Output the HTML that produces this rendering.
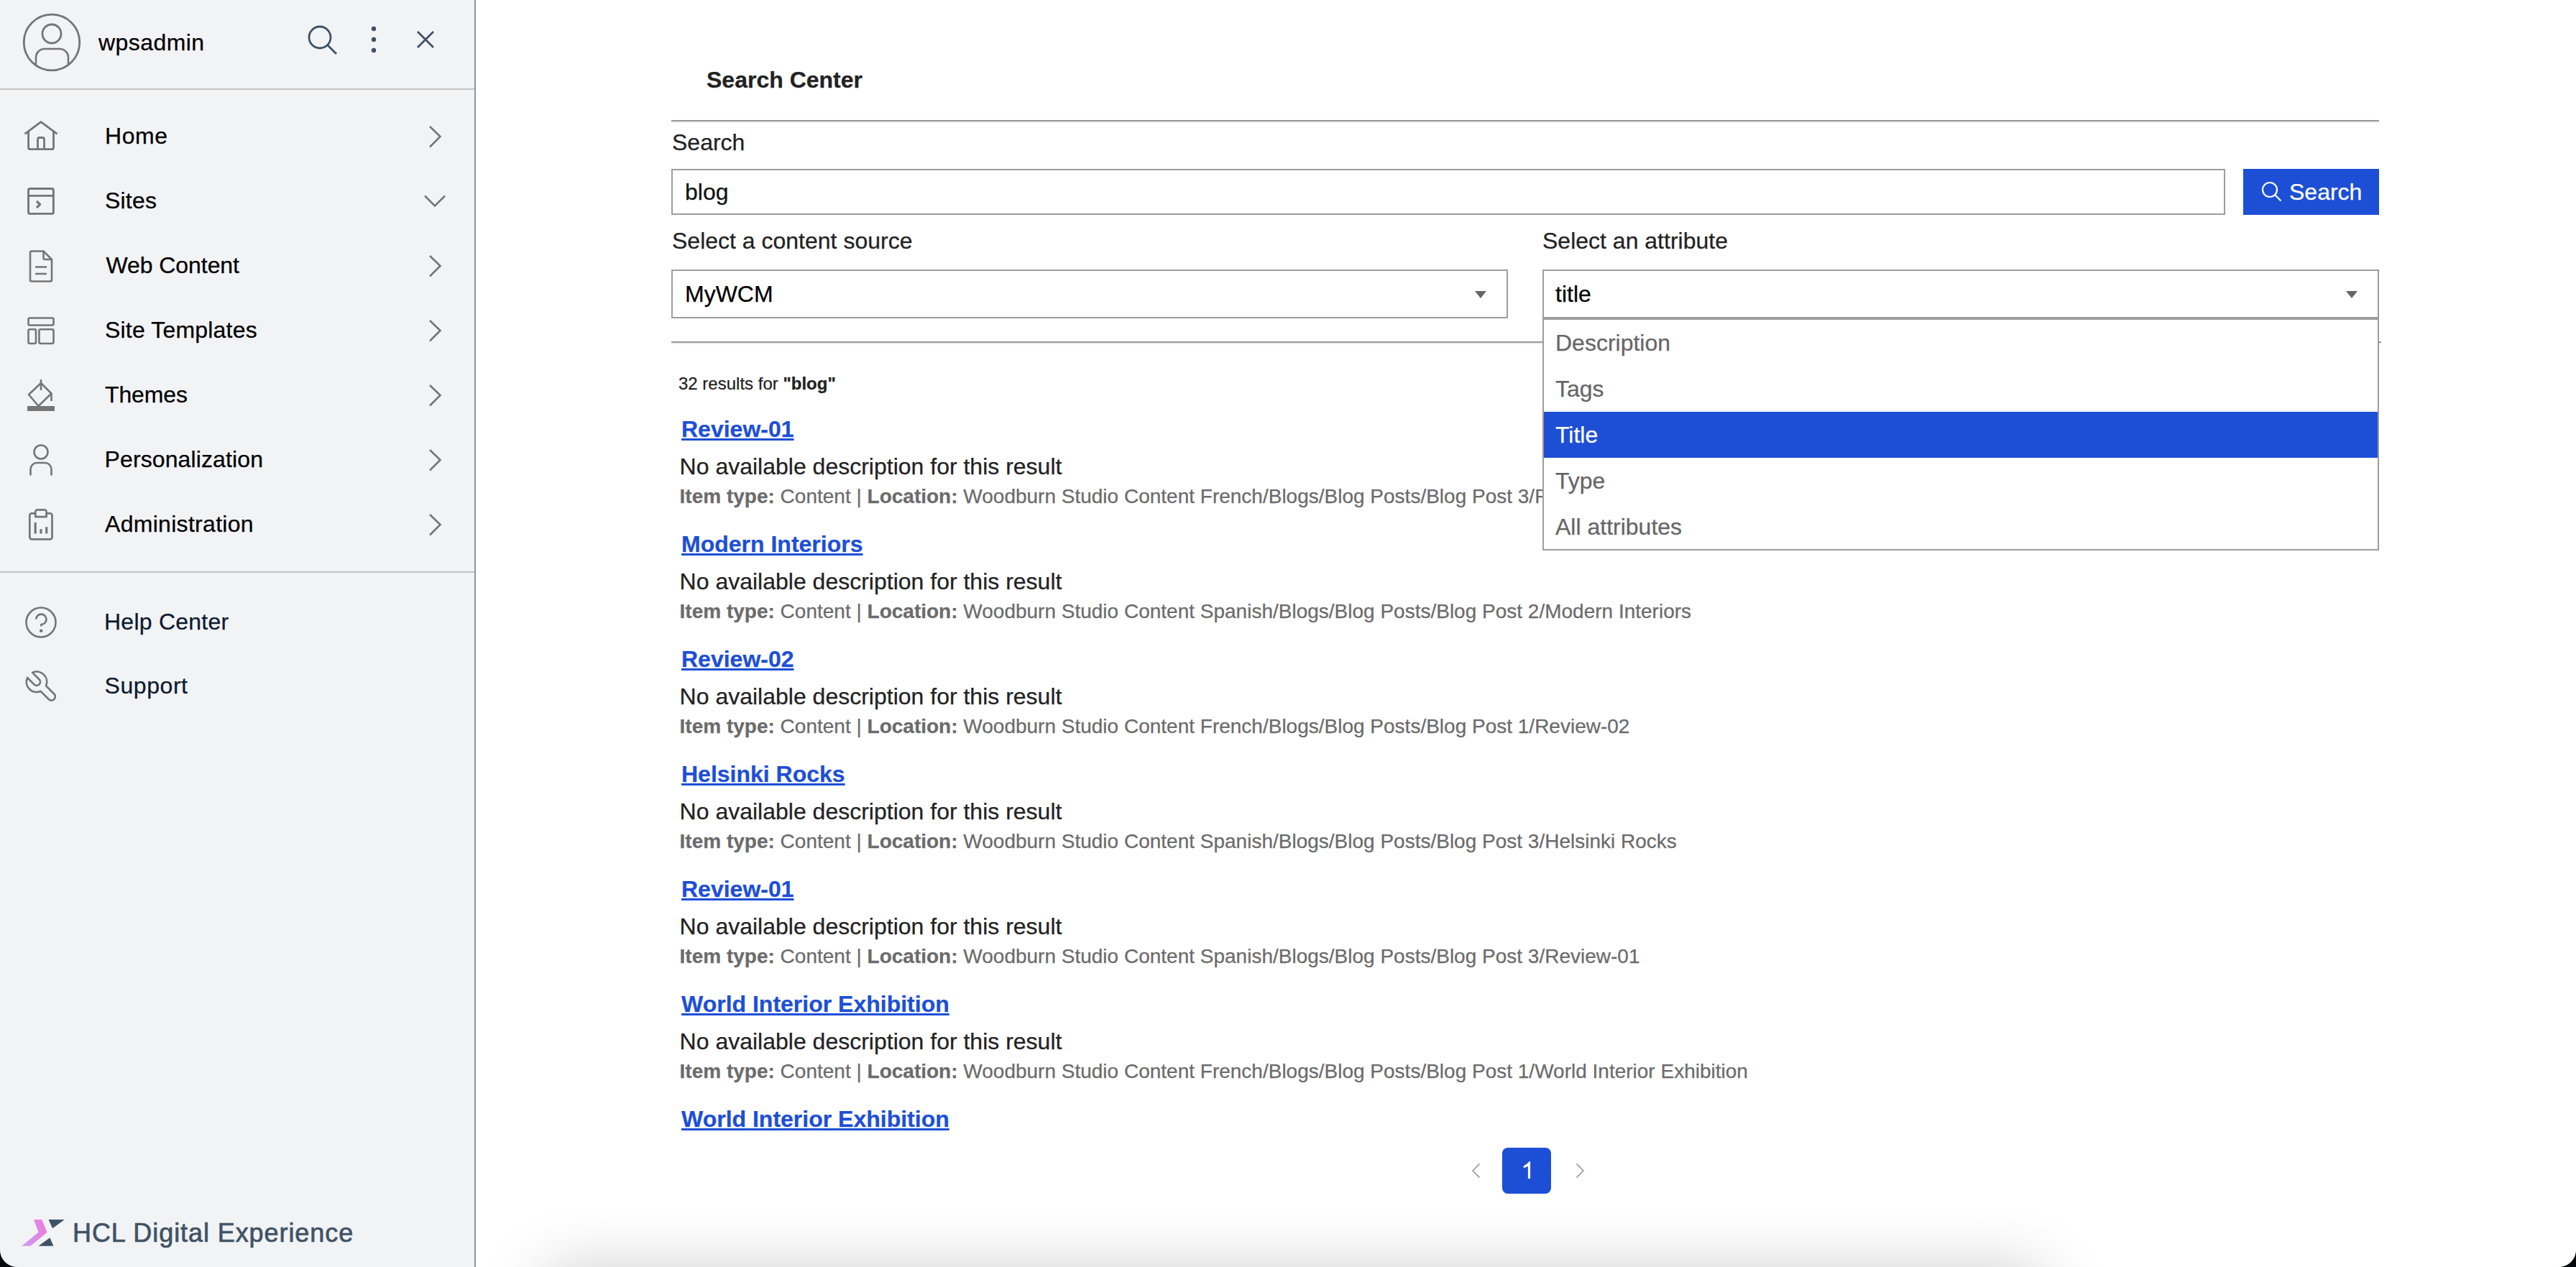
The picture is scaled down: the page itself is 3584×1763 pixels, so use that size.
<!DOCTYPE html>
<html><head><meta charset="utf-8">
<style>
*{margin:0;padding:0;box-sizing:border-box}
html,body{width:3584px;height:1763px;overflow:hidden;background:#fff;font-family:"Liberation Sans",sans-serif;color:#222;-webkit-text-stroke-width:0.25px}
.a{position:absolute;white-space:nowrap}
#side{position:absolute;left:0;top:0;width:662px;height:1763px;background:#f2f3f5;border-right:2px solid #8a96a3}
.t32{font-size:32px;line-height:40px}
.nav{color:#000}
.hr1{position:absolute;left:0;width:660px;height:2px;background:#c4c4c4}
svg{position:absolute;overflow:visible}
.hr2{position:absolute;left:934px;height:4px;border-top:2px solid #999;border-bottom:2px solid #eee}
.box{position:absolute;border:2px solid #9d9d9d;background:#fff}
.btn{position:absolute;background:#1d4fd6}
.lnk{color:#1d4fd6;font-weight:bold;text-decoration:underline;text-decoration-thickness:2.5px;text-underline-offset:2px}
.meta{font-size:28px;line-height:40px;color:#6b6b6b}
.pg{position:absolute;background:#1d4fd6;border-radius:8px;color:#fff;font-size:32px;line-height:64px;text-align:center}
.dd{position:absolute;border:2px solid #9d9d9d;background:#fff}
.opt{height:64px;font-size:32px;line-height:40px;padding:12px 0 0 16px;color:#666}
.opt.sel{background:#1d4fd6;color:#fff}
.corner{position:absolute;bottom:0;width:24px;height:24px;background:radial-gradient(circle at 24px 0, transparent 23.5px, #05080c 24.5px)}
.shadow{position:absolute;left:780px;top:1790px;width:2040px;height:100px;box-shadow:0 0 90px 20px rgba(0,0,0,.22)}

</style></head><body>
<div id="side">
  <!-- header -->
  <svg style="left:0;top:0" width="660" height="124" fill="none">
    <g stroke="#757575" stroke-width="2.6">
      <circle cx="72" cy="59" r="38.8" stroke-width="2.8"/>
      <circle cx="72" cy="47" r="13" stroke-width="2.8"/>
      <path d="M50 91 V80 a12 12 0 0 1 12 -12 H83 a12 12 0 0 1 12 12 V91"/>
    </g>
    <g stroke="#3e5166" stroke-width="2.8">
      <circle cx="445" cy="52" r="15"/>
      <path d="M456 63 L468 75"/>
      <path d="M581 44 L603 66 M603 44 L581 66"/>
    </g>
    <g fill="#3e5166">
      <circle cx="520" cy="40" r="3.2"/><circle cx="520" cy="55" r="3.2"/><circle cx="520" cy="70" r="3.2"/>
    </g>
  </svg>
  <div class="a t32 nav" style="left:137px;top:39px;letter-spacing:0.43px">wpsadmin</div>
  <div class="hr1" style="top:123px"></div>
  <!-- nav icons -->
  <svg style="left:0;top:124px" width="660" height="900" fill="none">
    <g stroke="#757575" stroke-width="2.6" stroke-linejoin="round">
      <!-- home: top=168..209 -> local y -124 -->
      <path d="M34.5 62.3 L57 45.6 L79.5 62.3" stroke-width="2.8"/>
      <path d="M39.6 58 V81.2 a2.5 2.5 0 0 0 2.5 2.5 H72 a2.5 2.5 0 0 0 2.5 -2.5 V58" stroke-width="2.8"/>
      <path d="M52.5 84 V70 a2.5 2.5 0 0 1 2.5 -2.5 H59 a2.5 2.5 0 0 1 2.5 2.5 V84" stroke-width="2.8"/>
      <!-- sites: 261..299 -->
      <rect x="39.55" y="138.55" width="34.8" height="34.8" rx="2.2" stroke-width="2.9"/>
      <path d="M39.55 148.4 H74.35" stroke-width="2.9"/>
      <path d="M51 155.8 L55.6 160.4 L51 165" stroke-width="3.2"/>
      <!-- web content 348..392 -->
      <path d="M60.5 225.5 H44 a2 2 0 0 0 -2 2 V265.5 a2 2 0 0 0 2 2 H70 a2 2 0 0 0 2 -2 V237 Z"/>
      <path d="M60.5 225.5 V235 a2 2 0 0 0 2 2 H72"/>
      <path d="M49 247.5 H65 M49 257 H65" stroke-linecap="butt"/>
      <!-- site templates 441..478 -->
      <rect x="39.5" y="318.5" width="35" height="10" rx="2"/>
      <rect x="39.5" y="334.3" width="10.5" height="19.7" rx="2"/>
      <rect x="54.5" y="334.3" width="20" height="19.7" rx="2"/>
      <!-- themes 528..572 -->
      <path d="M40 425 L57 409 L71.5 423.5 L53.5 441 Z"/>
      <path d="M57 404 V419 M71.5 423.5 V434"/>
      <!-- personalization 618..661 -->
      <circle cx="57" cy="505" r="9.5"/>
      <path d="M42.5 537.5 V529 a9 9 0 0 1 9 -9 H62.5 a9 9 0 0 1 9 9 V537.5"/>
      <!-- administration 708..752 -->
      <rect x="41.3" y="590.4" width="31.2" height="35.9" rx="2.8" stroke-width="2.7"/>
      <path d="M49.3 595.2 V588.2 a2.8 2.8 0 0 1 2.8 -2.8 H61.8 a2.8 2.8 0 0 1 2.8 2.8 V595.2 Z" fill="#f2f3f5" stroke-width="2.7"/>
      <path d="M49.2 603 V618.4 M57 612.3 V618.4 M64.7 609.2 V618.4" stroke-width="3.2"/>
      <!-- help 844..888 -->
      <circle cx="57" cy="742" r="20.5"/>
      <path d="M50.1 737.8 A7.2 7.2 0 1 1 57.3 745 V747.6"/>
      <!-- support wrench 933..976 -->
      <path d="M-5 -13.29 V0 A5 5 0 0 0 5 0 V-13.29 A14.2 14.2 0 0 1 5.3 13.17 V29 A5.3 5.3 0 0 1 -5.3 29 V13.17 A14.2 14.2 0 0 1 -5 -13.29 Z" transform="translate(51,824.8) rotate(-45)" stroke-width="2.7"/>
    </g>
    <circle cx="57.2" cy="753.8" r="2.3" fill="#757575"/>
    <!-- chevrons -->
    <g stroke="#757575" stroke-width="2.6">
      <path d="M598 52 L612.5 66 L598 80.5"/>
      <path d="M591 148.5 L605 162.5 L619 148.5"/>
      <path d="M598 232 L612.5 246 L598 260.5"/>
      <path d="M598 322 L612.5 336 L598 350.5"/>
      <path d="M598 412 L612.5 426 L598 440.5"/>
      <path d="M598 502 L612.5 516 L598 530.5"/>
      <path d="M598 592 L612.5 606 L598 620.5"/>
    </g>
    <rect x="38" y="441" width="38" height="7" fill="#757575"/>
  </svg>
  <div class="a t32 nav" style="left:146px;top:169px;letter-spacing:0.6px">Home</div>
  <div class="a t32 nav" style="left:146px;top:259px;letter-spacing:0.2px">Sites</div>
  <div class="a t32 nav" style="left:147.5px;top:349px;letter-spacing:-0.07px">Web Content</div>
  <div class="a t32 nav" style="left:146px;top:439px;letter-spacing:0.18px">Site Templates</div>
  <div class="a t32 nav" style="left:146px;top:529px;letter-spacing:-0.14px">Themes</div>
  <div class="a t32 nav" style="left:145.5px;top:619px;letter-spacing:0.12px">Personalization</div>
  <div class="a t32 nav" style="left:146px;top:709px;letter-spacing:0.3px">Administration</div>
  <div class="hr1" style="top:795px"></div>
  <div class="a t32" style="left:145px;top:845px;color:#0b1a30;letter-spacing:0.24px">Help Center</div>
  <div class="a t32" style="left:145.5px;top:934px;color:#0b1a30;letter-spacing:0.57px">Support</div>
  <!-- logo -->
  <svg style="left:0;top:1690px" width="120" height="50">
    <defs><linearGradient id="lg" gradientUnits="userSpaceOnUse" x1="30" y1="40" x2="66" y2="34"><stop offset="0" stop-color="#c99df3"/><stop offset="1" stop-color="#ea7edf"/></linearGradient></defs>
    <path d="M47 7 H58.2 L65.6 24.8 L42.4 43.8 H30.2 L53.5 24.8 Z" fill="url(#lg)"/>
    <path d="M67.5 7 H89.9 L73.1 19.2 Z" fill="#3f5266"/>
    <path d="M53.5 43.8 H74.4 L69.4 32.3 Z" fill="#3f5266"/>
  </svg>
  <div class="a" style="left:101px;top:1692px;font-size:36px;line-height:48px;color:#3f5266;letter-spacing:0.92px;-webkit-text-stroke:0.7px #3f5266">HCL Digital Experience</div>
</div>
<div id="main">
  <div class="a t32" style="left:983px;top:91px;font-weight:bold">Search Center</div>
  <div class="hr2" style="top:167px;width:2376px"></div>
  <div class="a t32" style="left:935px;top:178px">Search</div>
  <div class="box" style="left:934px;top:235px;width:2162px;height:64px"></div>
  <div class="a t32" style="left:953px;top:247px;color:#111">blog</div>
  <div class="btn" style="left:3121px;top:235px;width:189px;height:64px"></div>
  <svg style="left:3140px;top:250px" width="40" height="36" fill="none" stroke="#fff" stroke-width="2.2"><circle cx="18" cy="14" r="10"/><path d="M25.2 21.2 L33.5 29.5"/></svg>
  <div class="a t32" style="left:3185px;top:247px;color:#fff">Search</div>
  <div class="a t32" style="left:935px;top:315px">Select a content source</div>
  <div class="a t32" style="left:2146px;top:315px">Select an attribute</div>
  <div class="box" style="left:934px;top:375px;width:1164px;height:68px"></div>
  <div class="a t32" style="left:953px;top:389px;color:#000">MyWCM</div>
  <svg style="left:2052px;top:405px" width="16" height="10"><path d="M0 0 H16 L8 10 Z" fill="#666"/></svg>
  <div class="hr2" style="top:475px;width:2379px"></div>
  <div class="a" style="left:944px;top:514px;font-size:24px;line-height:40px">32 results for <b>"blog"</b></div>
  <div class="a t32 lnk" style="left:948px;top:577px">Review-01</div>
  <div class="a t32" style="left:945.6px;top:629px">No available description for this result</div>
  <div class="a meta" style="left:945.6px;top:670.8px"><b>Item type:</b> Content | <b>Location:</b> Woodburn Studio Content French/Blogs/Blog Posts/Blog Post 3/Review-01</div>
  <div class="a t32 lnk" style="left:948px;top:737px">Modern Interiors</div>
  <div class="a t32" style="left:945.6px;top:789px">No available description for this result</div>
  <div class="a meta" style="left:945.6px;top:830.8px"><b>Item type:</b> Content | <b>Location:</b> Woodburn Studio Content Spanish/Blogs/Blog Posts/Blog Post 2/Modern Interiors</div>
  <div class="a t32 lnk" style="left:948px;top:897px">Review-02</div>
  <div class="a t32" style="left:945.6px;top:949px">No available description for this result</div>
  <div class="a meta" style="left:945.6px;top:990.8px"><b>Item type:</b> Content | <b>Location:</b> Woodburn Studio Content French/Blogs/Blog Posts/Blog Post 1/Review-02</div>
  <div class="a t32 lnk" style="left:948px;top:1057px">Helsinki Rocks</div>
  <div class="a t32" style="left:945.6px;top:1109px">No available description for this result</div>
  <div class="a meta" style="left:945.6px;top:1150.8px"><b>Item type:</b> Content | <b>Location:</b> Woodburn Studio Content Spanish/Blogs/Blog Posts/Blog Post 3/Helsinki Rocks</div>
  <div class="a t32 lnk" style="left:948px;top:1217px">Review-01</div>
  <div class="a t32" style="left:945.6px;top:1269px">No available description for this result</div>
  <div class="a meta" style="left:945.6px;top:1310.8px"><b>Item type:</b> Content | <b>Location:</b> Woodburn Studio Content Spanish/Blogs/Blog Posts/Blog Post 3/Review-01</div>
  <div class="a t32 lnk" style="left:948px;top:1377px">World Interior Exhibition</div>
  <div class="a t32" style="left:945.6px;top:1429px">No available description for this result</div>
  <div class="a meta" style="left:945.6px;top:1470.8px"><b>Item type:</b> Content | <b>Location:</b> Woodburn Studio Content French/Blogs/Blog Posts/Blog Post 1/World Interior Exhibition</div>
  <div class="a t32 lnk" style="left:948px;top:1537px">World Interior Exhibition</div>
  <svg style="left:2040px;top:1610px" width="180" height="40" fill="none" stroke="#a6a6a6" stroke-width="1.8"><path d="M18.5 9.5 L9 19 L18.5 28.5"/><path d="M153.5 9.5 L163 19 L153.5 28.5"/></svg>
  <div class="pg" style="left:2090px;top:1597px;width:68px;height:64px"></div>
  <svg style="left:2090px;top:1597px" width="68" height="64"><path d="M37.7 18.9 H39.1 V43 H35.9 V25.8 L29.8 28.6 V25.3 C33 23.5 36 21.5 37.7 18.9 Z" fill="#fff"/></svg>
  <!-- dropdown -->
  <div class="box" style="left:2146px;top:375px;width:1164px;height:68px"></div>
  <div class="a t32" style="left:2164px;top:389px;color:#000">title</div>
  <svg style="left:3264px;top:405px" width="16" height="10"><path d="M0 0 H16 L8 10 Z" fill="#666"/></svg>
  <div class="dd" style="left:2146px;top:443px;width:1164px;height:323px">
    <div class="opt">Description</div><div class="opt">Tags</div><div class="opt sel">Title</div><div class="opt">Type</div><div class="opt">All attributes</div>
  </div>
</div>
<div class="shadow"></div>
<div class="corner" style="left:0"></div><div class="corner" style="right:0;transform:scaleX(-1)"></div>
</body></html>
